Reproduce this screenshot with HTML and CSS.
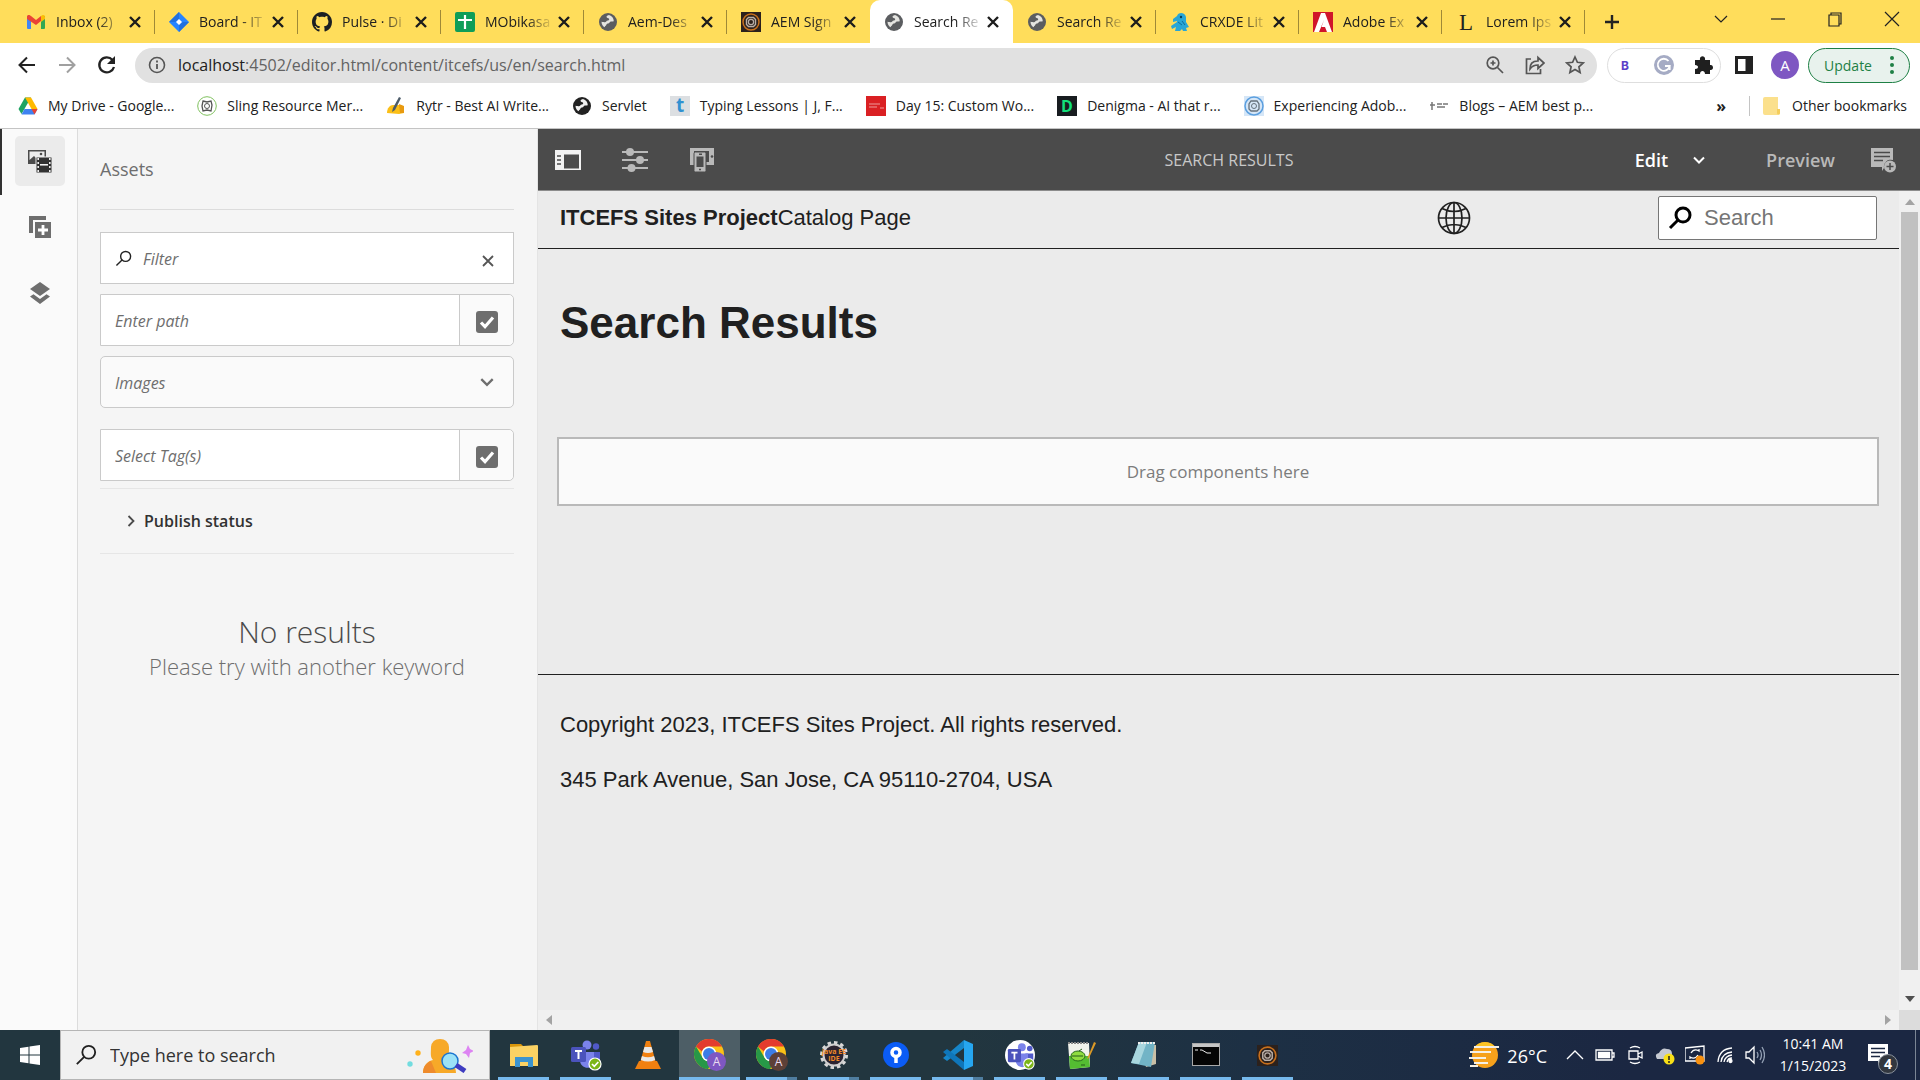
FILE: index.html
```
<!DOCTYPE html>
<html lang="en">
<head>
    <meta charset="UTF-8">
    <meta name="viewport" content="width=device-width, initial-scale=1.0">
    <title>Search Results</title>
    <link rel="stylesheet" href="styles.css">
</head>
<body>
    <!-- shared icons -->
    <svg class="sprite" aria-hidden="true">
        <symbol id="i-close" viewBox="0 0 14 14"><path d="M2 2l10 10M12 2L2 12" stroke="#1c1c1c" stroke-width="2.4" fill="none"/></symbol>
        <symbol id="i-world" viewBox="0 0 20 20"><circle cx="10" cy="10" r="9" fill="currentColor"/><path d="M11 3c-2 .5-3 1.500-2.200 2.500.8 1 2.700.6 2.400 2-.3 1.200-2.300.8-3 2-.5 1-1.700.6-4.700.2 0 3 1.600 4.500 3.100 5.500.4-1.500 1.900-1.500 2-2.900.2-1.100 2.500-.4 3-1.800.4-1.300 2.300-1 4.200-1.300-.2-3-1.700-5.400-4.800-6.200z"/></symbol>
        <symbol id="i-aem" viewBox="0 0 20 20"><circle cx="10" cy="10" r="8" fill="none" stroke="currentColor" stroke-width="1.500"/><path d="M7.500 5.500h5l2 2v5l-2 2h-5l-2-2v-5z" fill="none" stroke="#b9aea6" stroke-width="1.400"/><circle cx="10" cy="10" r="2.600" fill="none" stroke="#b9aea6" stroke-width="1.200"/></symbol>
        <symbol id="i-teams" viewBox="0 0 32 32"><circle cx="17" cy="6" r="4.500" fill="#7b83eb"/><circle cx="26" cy="7.500" r="3.200" fill="#5059c9"/><path d="M21 13h9v9a4 4 0 0 1-8 1z" fill="#5059c9"/><path d="M10 13h14v9c0 9-13 9-14 0z" fill="#7b83eb"/><rect x="1" y="8" width="15" height="15" rx="1.500" fill="#4b53bc"/><path d="M5 12h7M8.500 12v8" stroke="#fff" stroke-width="2"/><circle cx="25" cy="25" r="6" fill="#7cb518" stroke="#fff" stroke-width="1.200"/><path d="M22 25l2.300 2.300 4-4.300" fill="none" stroke="#fff" stroke-width="1.700"/></symbol>
        <symbol id="i-chrome" viewBox="0 0 32 32"><circle cx="15" cy="15" r="15" fill="#fbc116"/><path d="M2 7.500A15 15 0 0 1 28 7.500H15a7.500 7.500 0 0 0-7 5z" fill="#e33b2e"/><path d="M2 7.500A15 15 0 0 0 14 30l7-11a7.500 7.500 0 0 1-12.500-.500z" fill="#279847"/><circle cx="15" cy="15" r="7.500" fill="#fff"/><circle cx="15" cy="15" r="6" fill="#3c7de6"/><circle cx="22.500" cy="22.500" r="9.500" fill="currentColor"/><text x="22.500" y="27" text-anchor="middle" font-size="12" font-family="Open Sans, sans-serif" fill="#eadcf0">A</text></symbol>
        <symbol id="i-check" viewBox="0 0 24 24"><rect x="1" y="1" width="22" height="22" rx="3" fill="#6e6e6e"/><path d="M6 12.500l4 4.200L18 7.500" fill="none" stroke="#fff" stroke-width="3.200"/></symbol>
        <symbol id="i-down" viewBox="0 0 14 14"><path d="M2 4.500l5 5 5-5" fill="none" stroke="currentColor" stroke-width="2"/></symbol>
        <symbol id="i-lens" viewBox="0 0 24 24"><circle cx="15" cy="9" r="7" fill="none" stroke="currentColor"/><path d="M10.300 13.700L2 22" stroke="currentColor"/></symbol>
    </svg>

    <header class="browser">
        <div class="tab-strip">
            <nav class="tabs">
                <div class="tab"><svg class="favicon" viewBox="0 0 20 20"><path d="M1 4h4v13H2a1 1 0 0 1-1-1z" fill="#4285f4"/><path d="M15 4h4v12a1 1 0 0 1-1 1h-3z" fill="#34a853"/><path d="M1 5c0-3 3-2 4-1l5 4 5-4v5l-5 4-9-6z" fill="#ea4335"/><path d="M15 4c2-2 4-1 4 1v2l-4 3z" fill="#fbbc04"/></svg><span>Inbox (2)</span><button class="tab-close" aria-label="Close"><svg><use href="#i-close"/></svg></button></div>
                <div class="tab"><svg class="favicon" viewBox="0 0 20 20"><path d="M10 0l10 10-10 10L0 10z" fill="#2684ff"/><path d="M10 0v7l-4 3-6 0zM10 20v-7l4-3h6z" fill="#2070e0"/><path d="M10 7l3 3-3 3-3-3z" fill="#fff"/></svg><span>Board - IT</span><button class="tab-close" aria-label="Close"><svg><use href="#i-close"/></svg></button></div>
                <div class="tab"><svg class="favicon" viewBox="0 0 16 16"><path fill="#1b1f23" d="M8 0C3.580 0 0 3.580 0 8c0 3.540 2.290 6.530 5.470 7.590.4.070.55-.17.55-.38 0-.19-.01-.82-.01-1.490-2.010.37-2.530-.49-2.690-.94-.09-.23-.48-.94-.82-1.130-.28-.15-.68-.52-.01-.53.63-.01 1.080.58 1.230.82.72 1.210 1.870.87 2.330.66.070-.52.28-.87.51-1.070-1.780-.2-3.640-.89-3.640-3.950 0-.87.31-1.590.82-2.150-.08-.2-.36-1.020.08-2.120 0 0 .67-.21 2.200.82.64-.18 1.320-.27 2-.27s1.360.09 2 .27c1.530-1.040 2.200-.82 2.200-.82.44 1.100.16 1.920.08 2.120.51.56.82 1.270.82 2.150 0 3.070-1.870 3.750-3.650 3.950.29.25.54.73.54 1.480 0 1.070-.01 1.930-.01 2.200 0 .21.15.46.55.38A8.010 8.010 0 0 0 16 8c0-4.420-3.580-8-8-8z"/></svg><span>Pulse · Di</span><button class="tab-close" aria-label="Close"><svg><use href="#i-close"/></svg></button></div>
                <div class="tab"><svg class="favicon" viewBox="0 0 20 20"><rect width="20" height="20" rx="2" fill="#0f9d58"/><path d="M10 3v14M3 8h14" stroke="#fff" stroke-width="2.200"/></svg><span>MObikasa</span><button class="tab-close" aria-label="Close"><svg><use href="#i-close"/></svg></button></div>
                <div class="tab"><svg class="favicon world"><use href="#i-world"/></svg><span>Aem-Des</span><button class="tab-close" aria-label="Close"><svg><use href="#i-close"/></svg></button></div>
                <div class="tab before-active"><svg class="favicon aem"><use href="#i-aem"/></svg><span>AEM Sign</span><button class="tab-close" aria-label="Close"><svg><use href="#i-close"/></svg></button></div>
                <div class="tab active"><svg class="favicon world"><use href="#i-world"/></svg><span>Search Re</span><button class="tab-close" aria-label="Close"><svg><use href="#i-close"/></svg></button></div>
                <div class="tab"><svg class="favicon world"><use href="#i-world"/></svg><span>Search Re</span><button class="tab-close" aria-label="Close"><svg><use href="#i-close"/></svg></button></div>
                <div class="tab"><svg class="favicon" viewBox="0 0 20 20"><path d="M7 4c1-4 8-4 9 1v5l3 5-3 1 1 3h-4l-1-2-2 2H5l1-4-4 2-1-3 6-4V9L3 10V7z" fill="#28a6d6"/><circle cx="11" cy="5" r="1.200" fill="#083f5c"/><path d="M8 10l4 3M12 9l3 4" stroke="#0d6d9b" fill="none"/></svg><span>CRXDE Lit</span><button class="tab-close" aria-label="Close"><svg><use href="#i-close"/></svg></button></div>
                <div class="tab"><svg class="favicon" viewBox="0 0 20 20"><rect width="20" height="20" fill="#d0152a"/><path d="M1 20L8 1h4l7 19h-5l-2-5H8.500L11 8l0 0-5 12z" fill="#fff"/></svg><span>Adobe Ex</span><button class="tab-close" aria-label="Close"><svg><use href="#i-close"/></svg></button></div>
                <div class="tab"><svg class="favicon" viewBox="0 0 20 20"><text x="3" y="18" font-size="23" font-family="Liberation Serif, serif" fill="#222">L</text></svg><span>Lorem Ips</span><button class="tab-close" aria-label="Close"><svg><use href="#i-close"/></svg></button></div>
            </nav>
            <button class="new-tab" aria-label="New tab"><svg viewBox="0 0 16 16"><path d="M8 1v14M1 8h14" stroke="#222" stroke-width="2.400"/></svg></button>
            <div class="window-buttons">
                <button aria-label="Search tabs"><svg viewBox="0 0 16 16"><path d="M2 5l6 6 6-6"/></svg></button>
                <button aria-label="Minimize"><svg viewBox="0 0 16 16"><path d="M1 8h14"/></svg></button>
                <button aria-label="Restore"><svg viewBox="0 0 16 16"><path d="M2 4h10v11H2zM4 4V2h10v11h-2"/></svg></button>
                <button aria-label="Close window"><svg viewBox="0 0 16 16"><path d="M1 1l14 14M15 1L1 15"/></svg></button>
            </div>
        </div>

        <div class="address-row">
            <div class="nav-buttons">
                <button aria-label="Back"><svg viewBox="0 0 20 20"><path d="M18 10H3M10 2.500L2.500 10l7.500 7.500" fill="none" stroke="#222" stroke-width="2"/></svg></button>
                <button aria-label="Forward"><svg viewBox="0 0 20 20"><path d="M2 10h15M10 2.500l7.500 7.500-7.500 7.500" fill="none" stroke="#a0a0a0" stroke-width="2"/></svg></button>
                <button aria-label="Reload"><svg viewBox="0 0 20 20"><path d="M17 12a7.500 7.500 0 1 1-1.500-7" fill="none" stroke="#222" stroke-width="2.300"/><path d="M18 1v8h-8z" fill="#222"/></svg></button>
            </div>
            <div class="omnibox">
                <svg viewBox="0 0 18 18" class="info"><circle cx="9" cy="9" r="7.500" fill="none" stroke="#555" stroke-width="1.600"/><path d="M9 8v5M9 4.500v2" stroke="#555" stroke-width="1.800"/></svg>
                <a class="url" href="#"><b>localhost</b>:4502/editor.html/content/itcefs/us/en/search.html</a>
                <button aria-label="Zoom"><svg viewBox="0 0 20 20"><circle cx="8" cy="8" r="5.800" /><path d="M12.500 12.500L18 18M8 5.500v5M5.500 8h5"/></svg></button>
                <button aria-label="Share"><svg viewBox="0 0 20 20"><path d="M6 4H1.500v14.500h14V14"/><path d="M5 14c0-5 2-8 8-8V2.500l6 5.500-6 5.500V10c-4 0-6 1-8 4z"/></svg></button>
                <button aria-label="Bookmark"><svg viewBox="0 0 20 20"><path d="M10 2l2.400 5.300 5.800.6-4.300 3.900 1.200 5.700-5.100-2.900-5.100 2.900 1.200-5.700L1.800 7.900l5.800-.6z"/></svg></button>
            </div>
            <div class="extensions">
                <svg viewBox="0 0 20 20"><text x="6" y="15" font-size="12" font-weight="bold" font-family="Inter, sans-serif" fill="#5a40c8">B</text></svg>
                <svg viewBox="0 0 20 20"><circle cx="10" cy="10" r="10" fill="#a5abc4"/><path d="M14.500 6a6 6 0 1 0 1.200 5H11M15.700 11v4" fill="none" stroke="#fff" stroke-width="1.800"/></svg>
                <svg viewBox="0 0 20 20"><path d="M2 5h5c-1-5 6-5 5 0h5v5c4-1 4 6 0 5v4h-5c0-4-5-4-5 0H2v-5c4 0 4-4 0-4z" fill="#1f1f1f"/></svg>
            </div>
            <button class="side-panel" aria-label="Side panel"><svg viewBox="0 0 20 20"><path d="M1 1h18v18H1z" fill="#222"/><path d="M4 4h7.500v12H4z" fill="#fff"/></svg></button>
            <button class="avatar">A</button>
            <button class="update">Update <svg viewBox="0 0 4 18"><circle cx="2" cy="2" r="2"/><circle cx="2" cy="9" r="2"/><circle cx="2" cy="16" r="2"/></svg></button>
        </div>

        <nav class="bookmarks">
            <a href="#"><svg viewBox="0 0 20 20"><path d="M7 1.500h6L7 12 3.500 18 .5 13z" fill="#1ea362"/><path d="M7 1.500h6L19.500 13h-6z" fill="#ffba00"/><path d="M6.500 13h13l-3 5.500h-13z" fill="#3f82f1"/><path d="M13.500 13h6l-3 5.500z" fill="#e94335"/></svg>My Drive - Google...</a>
            <a href="#"><svg viewBox="0 0 20 20"><circle cx="10" cy="10" r="9.300" fill="#fff" stroke="#7fc15e"/><path d="M6 5l4 1 4-1 1 4-1 6-4-1-4 1-1-5z" fill="none" stroke="#555" stroke-width="1.300"/><circle cx="10" cy="10" r="2.500" fill="none" stroke="#555"/></svg>Sling Resource Mer...</a>
            <a href="#"><svg viewBox="0 0 20 20"><path d="M1 17c0-5 3-8 6-8l8 0 3 2v6l-5 1z" fill="#fbbf17"/><path d="M13 8l5 2v7l-4 0z" fill="#e89a10"/><path d="M13 1l2 1-6 12-3 2 1-4z" fill="#4c5b69"/></svg>Rytr - Best AI Write...</a>
            <a href="#"><svg class="dark-world"><use href="#i-world"/></svg>Servlet</a>
            <a href="#"><svg viewBox="0 0 20 20"><rect width="20" height="20" fill="#dcdfe2"/><text x="6" y="16" font-size="19" font-weight="bold" font-family="Open Sans, sans-serif" fill="#3191d1">t</text></svg>Typing Lessons | J, F...</a>
            <a href="#"><svg viewBox="0 0 20 20"><rect width="20" height="20" fill="#da2023"/><path d="M3 8h11M3 11h8M14 12h4" stroke="#ee9a9a"/></svg>Day 15: Custom Wo...</a>
            <a href="#"><svg viewBox="0 0 20 20"><rect width="20" height="20" fill="#181c20"/><text x="4" y="16" font-size="16" font-weight="bold" font-family="Open Sans, sans-serif" fill="#12e07a">D</text></svg>Denigma - AI that r...</a>
            <a href="#"><svg viewBox="0 0 20 20"><rect width="20" height="20" fill="#d5e6f7"/><circle cx="10" cy="10" r="9" fill="none" stroke="#5b9fdf" stroke-width="1.500"/><path d="M7 5h6l2 3v5l-2 2H7l-2-2V8z" fill="none" stroke="#66727c" stroke-width="1.300"/><circle cx="10" cy="10" r="2.500" fill="none" stroke="#66727c"/></svg>Experiencing Adob...</a>
            <a href="#"><svg viewBox="0 0 20 20"><path d="M1 9h5M3 6v8M8 8h5M8 11h8M14 8h5" stroke="#777" stroke-width="1.500"/></svg>Blogs – AEM best p...</a>
            <button class="more" aria-label="More bookmarks">»</button>
            <a href="#" class="other"><svg viewBox="0 0 20 20"><path d="M3 1h13v12h2v4a2 2 0 0 1-2 2H3a2 2 0 0 1-2-2V3a2 2 0 0 1 2-2z" fill="#fbe08c"/><path d="M15 13h3v4a1.500 1.500 0 0 1-3 0z" fill="#f4cd5c"/></svg>Other bookmarks</a>
        </nav>
    </header>

    <main class="workspace">
        <nav class="rail">
            <button class="selected" aria-label="Assets"><svg viewBox="0 0 24 24"><path d="M0 1h18v14H0z" fill="#4b4b4b"/><path d="M1.500 2.500h15V8H8v1L6 7l-4.500 4z" fill="#ececec"/><circle cx="13" cy="5" r="1.300" fill="#4b4b4b"/><path d="M8 8h16v16H8z" fill="#323232" stroke="#ececec"/><path d="M12 15.800h8" stroke="#fff" stroke-width="1.500"/><path d="M10.200 9v14M21.800 9v14" stroke="#ececec" stroke-width="1.600" stroke-dasharray="2 2"/></svg></button>
            <button aria-label="Components"><svg viewBox="0 0 24 24"><path d="M1 1h17v4H5v13H1z" fill="#6e6e6e"/><path d="M7 7h16v16H7z" fill="#6e6e6e"/><path d="M15 10v10M10 15h10" stroke="#fff" stroke-width="2.800"/></svg></button>
            <button aria-label="Content tree"><svg viewBox="0 0 24 24"><path d="M12 1l10 7-10 7L2 8z" fill="#6e6e6e"/><path d="M2 15.500l3.500-2.300L12 18l6.500-4.800 3.500 2.300L12 23z" fill="#6e6e6e"/></svg></button>
        </nav>

        <aside class="assets">
            <h2>Assets</h2>
            <div class="field">
                <svg class="lens"><use href="#i-lens"/></svg>
                <input type="text" aria-label="Filter" placeholder="Filter">
                <button class="clear" aria-label="Clear"><svg viewBox="0 0 14 14"><path d="M2 2l10 10M12 2L2 12" stroke="#555" stroke-width="1.800"/></svg></button>
            </div>
            <div class="field joined">
                <input type="text" aria-label="Path" placeholder="Enter path">
                <button class="pick" aria-label="Select path"><svg><use href="#i-check"/></svg></button>
            </div>
            <div class="field type">
                <select aria-label="Asset type"><option>Images</option></select>
                <svg class="arrow"><use href="#i-down"/></svg>
            </div>
            <div class="field joined tags">
                <input type="text" aria-label="Tags" placeholder="Select Tag(s)">
                <button class="pick" aria-label="Select tags"><svg><use href="#i-check"/></svg></button>
            </div>
            <button class="accordion"><svg viewBox="0 0 14 14"><path d="M4.500 2l5 5-5 5" fill="none" stroke="#4b4b4b" stroke-width="1.800"/></svg>Publish status</button>
            <div class="empty">
                <h3>No results</h3>
                <p>Please try with another keyword</p>
            </div>
        </aside>

        <section class="editor">
            <div class="editor-bar">
                <div class="tools">
                    <button aria-label="Toggle side panel"><svg viewBox="0 0 26 24"><path d="M0 2h26v20H0z" fill="#f2f2f2"/><path d="M9 6.500h15V20.500H9z" fill="#4b4b4b"/><path d="M2 8h4M2 12h4M2 16h4" stroke="#4b4b4b" stroke-width="1.300"/></svg></button>
                    <button aria-label="Page information"><svg viewBox="0 0 26 24"><path d="M0 4h26M0 12h26M0 20h26" stroke="#b9b9b9" stroke-width="2"/><circle cx="8" cy="4" r="4" fill="#b9b9b9"/><circle cx="18" cy="12" r="4" fill="#b9b9b9"/><circle cx="9.500" cy="20" r="4" fill="#b9b9b9"/></svg></button>
                    <button aria-label="Emulator"><svg viewBox="0 0 26 24"><path d="M1 0h24v17h-8v-3h3V3H5v14H1z" fill="#b9b9b9"/><rect x="5" y="4" width="12" height="20" rx="1.500" fill="#b9b9b9" stroke="#4b4b4b"/><path d="M7.500 8.500h7v10.500h-7z" fill="#4b4b4b"/><path d="M10 6.300h3M10 21.500h2" stroke="#4b4b4b" stroke-width="1.500"/><circle cx="23" cy="8.500" r="1.300" fill="#4b4b4b"/></svg></button>
                </div>
                <span class="page-name">SEARCH RESULTS</span>
                <div class="modes">
                    <button class="mode">Edit <svg><use href="#i-down"/></svg></button>
                    <button class="preview">Preview</button>
                    <button class="annotate" aria-label="Annotate"><svg viewBox="0 0 26 26"><path d="M1 1h22v12a7 7 0 0 0-9 8l-2 3v-4H1z" fill="#b9b9b9"/><path d="M4 5.500h16M4 9.500h16M4 13.500h9" stroke="#4b4b4b" stroke-width="1.300"/><circle cx="20" cy="19.500" r="6" fill="#b9b9b9"/><path d="M20 16v7M16.500 19.500h7" stroke="#4b4b4b" stroke-width="1.500"/></svg></button>
                </div>
            </div>

            <div class="viewport">
                <div class="page">
                    <header class="site-header">
                        <p><b>ITCEFS Sites Project</b>Catalog Page</p>
                        <button class="language" aria-label="Language"><svg viewBox="0 0 34 34"><g fill="none" stroke="#202020" stroke-width="1.700"><circle cx="17" cy="17" r="15.500"/><ellipse cx="17" cy="17" rx="8" ry="15.500"/><path d="M17 1.500v31M1.500 17h31M5 7.500q12 6 24 0M5 26.500q12-6 24 0"/></g></svg></button>
                        <label class="site-search">
                            <svg class="thick"><use href="#i-lens"/></svg>
                            <input type="text" aria-label="Search" placeholder="Search">
                        </label>
                    </header>
                    <div class="site-main">
                        <h1>Search Results</h1>
                        <div class="drop-zone">Drag components here</div>
                    </div>
                    <footer class="site-footer">
                        <p>Copyright 2023, ITCEFS Sites Project. All rights reserved.</p>
                        <p>345 Park Avenue, San Jose, CA 95110-2704, USA</p>
                    </footer>
                </div>
                <div class="scroll-y">
                    <svg viewBox="0 0 10 10"><path d="M0 8l5-6 5 6z" fill="#a3a3a3"/></svg>
                    <div class="thumb"></div>
                    <svg viewBox="0 0 10 10"><path d="M0 2l5 6 5-6z" fill="#505050"/></svg>
                </div>
                <div class="scroll-x">
                    <svg viewBox="0 0 10 10"><path d="M8 0L2 5l6 5z" fill="#a3a3a3"/></svg>
                    <svg viewBox="0 0 10 10"><path d="M2 0l6 5-6 5z" fill="#a3a3a3"/></svg>
                </div>
                <div class="corner"></div>
            </div>
        </section>
    </main>

    <footer class="taskbar">
        <button class="start" aria-label="Start"><svg viewBox="0 0 20 20"><path d="M0 3l8.500-1.200v7.700H0zM9.500 1.600L20 0v9.500H9.500zM0 10.500h8.500v7.700L0 17zM9.500 10.500H20V20L9.500 18.400z" fill="#fff"/></svg></button>
        <label class="task-search">
            <svg class="lens"><use href="#i-lens"/></svg>
            <input type="text" aria-label="Windows search" placeholder="Type here to search">
            <svg class="search-art" viewBox="0 0 66 36"><circle cx="11" cy="16" r="2.700" fill="#ffb11b"/><circle cx="3" cy="27" r="2.700" fill="#72dcdf"/><path d="M16 36c0-8 5-12 10-13-3-3-2-7-2-13q1-8 9-8t9 8c0 6 0 10-3 13 5 1 10 5 10 13z" fill="#f7a928"/><path d="M16 36c0-6 3-10 8-12l5 12z" fill="#ee8b2c"/><circle cx="43" cy="24" r="8" fill="#9ce2f7" stroke="#1c75cf" stroke-width="1.500"/><path d="M49 28l9 6" stroke="#3f3cc0" stroke-width="5"/><path d="M61 8l2 4 4 2-4 2-1 5-3-4-4-1 4-3z" fill="#dd84f2"/></svg>
        </label>
        <nav class="apps">
            <button class="open" aria-label="File Explorer"><svg viewBox="0 0 32 32"><path d="M2 5h11l3 3H2z" fill="#d9960b"/><path d="M2 8l27-2q1 0 1 1v20H2z" fill="#fbd263"/><path d="M7 28V18h18v10h-5v-5h-8v5z" fill="#3c94cf"/></svg></button>
            <button class="open" aria-label="Teams"><svg><use href="#i-teams"/></svg></button>
            <button aria-label="VLC"><svg viewBox="0 0 32 32"><path d="M7 22h18l4 8H3z" fill="#f08010"/><path d="M14 2h4l6 22q-8 4-16 0z" fill="#f08010"/><path d="M12.500 8h7l1.500 5q-5 2-10 0zM10 17q6 2.500 12 0l1.200 4q-7 3-14.400 0z" fill="#e8e8e8"/></svg></button>
            <button class="open current chrome-violet" aria-label="Chrome"><svg><use href="#i-chrome"/></svg></button>
            <button class="open stacked chrome-brown" aria-label="Chrome"><svg><use href="#i-chrome"/></svg></button>
            <button class="open stacked" aria-label="Eclipse"><svg viewBox="0 0 32 32"><circle cx="16" cy="16" r="12.500" fill="none" stroke="#d8d8d8" stroke-width="3" stroke-dasharray="3.500 3"/><circle cx="16" cy="16" r="10.500" fill="#2b2330" stroke="#cfcfcf" stroke-width="2"/><text x="16" y="15" text-anchor="middle" font-size="7" font-weight="bold" font-family="Open Sans, sans-serif" fill="#f08a28">Java EE</text><text x="16" y="22" text-anchor="middle" font-size="7" font-weight="bold" font-family="Open Sans, sans-serif" fill="#f08a28">IDE</text></svg></button>
            <button class="open" aria-label="Sourcetree"><svg viewBox="0 0 32 32"><circle cx="16" cy="16" r="13" fill="#0b5cf5"/><circle cx="16" cy="13.500" r="4" fill="none" stroke="#fff" stroke-width="3.500"/><path d="M16 17v7" stroke="#fff" stroke-width="3.500"/></svg></button>
            <button class="open stacked" aria-label="VS Code"><svg viewBox="0 0 32 32"><path d="M22 1l9 4v22l-9 4z" fill="#26a6f0"/><path d="M22 1v8L5 22l-4-3z" fill="#1686c9"/><path d="M22 31v-8L5 10l-4 3z" fill="#0f76b9"/></svg></button>
            <button class="open" aria-label="Teams"><svg viewBox="0 0 32 32"><circle cx="16" cy="16" r="15" fill="#fff"/><use href="#i-teams" x="3" y="3" width="28" height="28"/></svg></button>
            <button class="open" aria-label="Notepad++"><svg viewBox="0 0 32 32"><path d="M2 4h21l1 24-20 2z" fill="#f1f3ec"/><path d="M3 17h20l1 11-20 2z" fill="#54bd32"/><path d="M2 4h21" stroke="#888" stroke-width="2" stroke-dasharray="2 1"/><ellipse cx="12" cy="17" rx="7" ry="5" fill="#8fdc3f" stroke="#276b1e"/><path d="M6 17h11M13 12l3-2M15 26h4" stroke="#245a1c"/><path d="M28 3l2 1-7 15-2 1z" fill="#dc9a26"/></svg></button>
            <button class="open" aria-label="Notepad"><svg viewBox="0 0 32 32"><path d="M11 4l17 2v19l-10 3z" fill="#c9bfa6"/><path d="M11 3h16l-4 25-20-4z" fill="#72b4c6"/><path d="M11 3h8l-8 22-8-1z" fill="#a9d7df"/><path d="M10 4h18" stroke="#eee" stroke-width="2" stroke-dasharray="2 1"/></svg></button>
            <button class="open" aria-label="Command Prompt"><svg viewBox="0 0 32 32"><rect x="2.500" y="4.500" width="27" height="22" fill="#050505" stroke="#a8a8a8"/><path d="M3 5h26v3H3z" fill="#c6c6c6"/><path d="M5 11h3M10 11h2l5 3h4" stroke="#eee" fill="none"/></svg></button>
            <button class="open" aria-label="AEM"><svg class="aem small"><use href="#i-aem"/></svg></button>
        </nav>
        <div class="tray">
            <svg class="sun" viewBox="0 0 32 28"><circle cx="17" cy="14" r="13" fill="#f6a11c"/><path d="M6 7a13 13 0 0 1 22 0z" fill="#fcc425"/><path d="M6 6h25M2 11h21M1 17h17M6 22h14M2 25h8" stroke="#f5f0e6" stroke-width="2"/></svg>
            <span class="temp">26°C</span>
            <div class="tray-icons">
                <svg viewBox="0 0 20 20"><path d="M2 14l8-8 8 8"/></svg>
                <svg viewBox="0 0 20 20"><path d="M1 5h16v10H1zM17 8h2v4h-2"/><path d="M3.500 7.500h11v5h-11z" fill="#fff"/></svg>
                <svg viewBox="0 0 20 20"><path d="M4 6h9v8H4zM13 9l4-2v6l-4-2M5 3q5-3 10 0M5 17q5 3 10 0"/></svg>
                <svg viewBox="0 0 20 20"><path d="M2 14q-3-5 2-6 3-6 8-4 5 0 5 5v5z" fill="#c5c9d1" stroke="none"/><circle cx="14" cy="14" r="5.500" fill="#f8df17" stroke="none"/><path d="M14 11v4M14 16v2" stroke="#222" stroke-width="1.500"/></svg>
                <svg viewBox="0 0 20 20"><path d="M0 3l19-2v15H0zM6 8q3-5 8-2V4M13 10q-3 5-8 2v2"/><circle cx="15" cy="15" r="4.500" fill="#f99110" stroke="none"/></svg>
                <svg viewBox="0 0 20 20"><path d="M3 17Q4 4 17 3M6 17Q7 8 17 7M9 17q1-6 8-7M12 17q1-4 5-4"/><circle cx="15.500" cy="16" r="1.500" fill="#fff"/></svg>
                <svg viewBox="0 0 20 20"><path d="M1 7h3l5-5v16l-5-5H1z"/><path d="M12 7q2 3 0 6M15 5q3 5 0 10M17 2q5 8 0 16" stroke="#93a0b4"/></svg>
            </div>
            <div class="clock"><span>10:41 AM</span><span>1/15/2023</span></div>
            <button class="notify" aria-label="Notifications"><svg viewBox="0 0 30 30"><path d="M0 0h20v17h-6l-4 4v-4H0z" fill="#fff"/><path d="M3 4.500h14M3 8.500h14M3 12.500h9" stroke="#1b2742" stroke-width="1.300"/><circle cx="20" cy="20" r="9.500" fill="#32373f" stroke="#8a929c"/><text x="20" y="25" text-anchor="middle" font-size="14" font-weight="bold" font-family="Open Sans, sans-serif" fill="#fff">4</text></svg></button>
        </div>
    </footer>
</body>
</html>
```
FILE: styles.css
```
* {
    box-sizing: border-box;
}

body {
    margin: 0;
    height: 100vh;
    display: flex;
    flex-direction: column;
    overflow: hidden;
    font-family: "Open Sans", "Noto Sans", sans-serif;
    color: #202020;
}

button,
input,
select {
    font: inherit;
    color: inherit;
    background: none;
    border: none;
    padding: 0;
    margin: 0;
    min-width: 0;
}

button {
    display: flex;
    align-items: center;
    justify-content: center;
    flex-shrink: 0;
}

svg {
    width: 20px;
    height: 20px;
    flex-shrink: 0;
}

a {
    color: inherit;
    text-decoration: none;
}

h1, h2, h3, p {
    margin: 0;
}

.sprite {
    position: absolute;
    width: 0;
    height: 0;
}

/* Browser tabs */
.tab-strip {
    display: flex;
    height: 43px;
    background: #ffdd5b;
    padding-left: 12px;
}

.tabs {
    display: flex;
}

.tab {
    display: flex;
    align-items: center;
    width: 143px;
    padding: 0 13px 0 14px;
    font-size: 14px;
    background: linear-gradient(#9f8937, #9f8937) right center / 1px 24px no-repeat;
}

.tab span {
    flex: 1;
    margin-left: 10px;
    margin-right: 3px;
    white-space: nowrap;
    mask-image: linear-gradient(to right, #000 60%, transparent);
}

.tab.before-active {
    background: none;
}

.tab.active {
    background: #fff;
    border-radius: 10px 10px 0 0;
}

.tab-close svg {
    width: 14px;
    height: 14px;
}

.world {
    color: #5b5d60;
    fill: #e4e4e0;
}

.dark-world {
    color: #222;
    fill: #f2f2f2;
}

.aem {
    color: #c8701d;
    background: #2c211c;
}

.new-tab {
    width: 54px;
}

.new-tab svg {
    width: 16px;
    height: 16px;
}

.window-buttons {
    display: flex;
    margin-left: auto;
}

.window-buttons button {
    width: 57px;
    height: 37px;
}

.window-buttons svg {
    width: 16px;
    height: 16px;
    fill: none;
    stroke: #222;
    stroke-width: 1.2px;
}

/* Address row */
.address-row {
    display: flex;
    align-items: center;
    height: 44px;
    padding-right: 10px;
    background: #fff;
}

.nav-buttons {
    display: flex;
    width: 135px;
    padding-left: 7px;
}

.nav-buttons button {
    width: 40px;
}

.omnibox {
    display: flex;
    align-items: center;
    flex: 1;
    height: 35px;
    padding: 0 2px 0 13px;
    border-radius: 18px;
    background: #e1e1e1;
}

.info {
    width: 18px;
    height: 18px;
}

.url {
    flex: 1;
    margin-left: 12px;
    font-size: 16px;
    color: #636363;
}

.url b {
    font-weight: normal;
    color: #202020;
}

.omnibox button {
    width: 40px;
}

.omnibox button svg {
    fill: none;
    stroke: #555;
    stroke-width: 1.7px;
}

.extensions {
    display: flex;
    align-items: center;
    justify-content: space-between;
    width: 114px;
    height: 35px;
    margin-left: 10px;
    padding: 0 7px;
    border: 1px solid #dedede;
    border-radius: 18px;
}

.side-panel {
    width: 46px;
}

.avatar {
    width: 28px;
    height: 28px;
    margin-right: 9px;
    margin-left: 4px;
    border-radius: 50%;
    background: #7e57c2;
    color: #fff;
    font-size: 15px;
}

.update {
    width: 102px;
    height: 35px;
    gap: 18px;
    border: 1px solid #1e8045;
    border-radius: 18px;
    background: #e8f2ed;
    color: #1e8045;
    font-size: 14px;
}

.update svg {
    width: 4px;
    height: 18px;
    fill: #1e8045;
}

/* Bookmarks */
.bookmarks {
    display: flex;
    align-items: center;
    height: 42px;
    padding: 0 13px 4px 18px;
    gap: 23px;
    border-bottom: 1px solid #c4c4c4;
    font-size: 14px;
    white-space: nowrap;
}

.bookmarks a {
    display: flex;
    align-items: center;
    gap: 10px;
}

.more {
    margin-left: auto;
    font-size: 16px;
    font-weight: bold;
}

.bookmarks .other {
    padding-left: 12px;
    border-left: 1px solid #c4c4c4;
}

/* Workspace */
.workspace {
    display: flex;
    flex: 1;
    min-height: 0;
}

.rail {
    display: flex;
    flex-direction: column;
    gap: 16px;
    width: 78px;
    padding: 7px 0 0 15px;
    border-right: 1px solid #dcdcdc;
    background: linear-gradient(#323232, #323232) left top / 2px 66px no-repeat #fafafa;
}

.rail button {
    width: 50px;
    height: 50px;
    border-radius: 5px;
}

.rail .selected {
    background: #ebebeb;
}

.rail svg {
    width: 24px;
    height: 24px;
}

.assets {
    width: 460px;
    padding: 0 23px 0 22px;
    border-right: 1px solid #e4e4e4;
    background: #f5f5f5;
}

.assets h2 {
    height: 81px;
    line-height: 80px;
    margin-bottom: 22px;
    border-bottom: 1px solid #dcdcdc;
    font-size: 18px;
    font-weight: normal;
    color: #6e6e6e;
}

.field {
    display: flex;
    align-items: center;
    height: 52px;
    margin-bottom: 10px;
    padding: 0 14px;
    border: 1px solid #cacaca;
    background: #fff;
    font-size: 16px;
    font-style: italic;
    color: #6e6e6e;
}

.field input,
.field select {
    flex: 1;
    height: 100%;
    padding-top: 2px;
    appearance: none;
}

.field input::placeholder {
    color: #6e6e6e;
}

.field .lens {
    width: 17px;
    height: 17px;
    margin-right: 11px;
    color: #222;
    stroke-width: 2px;
}

.clear {
    width: 22px;
    padding-top: 6px;
}

.clear svg {
    width: 14px;
    height: 14px;
}

.joined {
    padding-right: 0;
    border-radius: 0 5px 5px 0;
}

.pick {
    width: 54px;
    height: 50px;
    padding-top: 3px;
    border-left: 1px solid #cacaca;
    border-radius: 0 5px 5px 0;
    background: #fafafa;
}

.pick svg {
    width: 24px;
    height: 24px;
}

.type {
    border-radius: 5px;
    background: #fafafa;
    margin-bottom: 21px;
}

.arrow {
    width: 16px;
    height: 16px;
    margin-right: 4px;
}

.tags {
    margin-bottom: 7px;
}

.accordion {
    justify-content: flex-start;
    gap: 6px;
    width: 100%;
    height: 66px;
    padding-left: 24px;
    border-top: 1px solid #e6e6e6;
    border-bottom: 1px solid #e6e6e6;
    font-size: 16px;
    font-weight: 600;
    color: #323232;
}

.accordion svg {
    width: 14px;
    height: 14px;
}

.empty {
    margin-top: 58px;
    text-align: center;
    font-weight: 300;
    color: #4b4b4b;
}

.empty h3 {
    font-size: 30px;
    line-height: 40px;
    font-weight: 300;
}

.empty p {
    font-size: 22px;
    line-height: 28px;
    color: #6e6e6e;
}

/* Editor */
.editor {
    display: flex;
    flex-direction: column;
    flex: 1;
    min-width: 0;
}

.editor-bar {
    display: grid;
    grid-template-columns: 1fr auto 1fr;
    align-items: center;
    height: 62px;
    border-bottom: 1px solid #8c8c8c;
    background: #4b4b4b;
    color: #c8c8c8;
}

.tools {
    display: flex;
    gap: 41px;
    padding-left: 17px;
}

.tools svg {
    width: 26px;
    height: 24px;
}

.page-name {
    font-size: 16px;
}

.modes {
    display: flex;
    justify-content: flex-end;
    padding-right: 24px;
    font-size: 18px;
    font-weight: 600;
    color: #b9b9b9;
}

.mode {
    gap: 24px;
    color: #fff;
}

.mode svg {
    width: 14px;
    height: 14px;
}

.preview {
    margin-left: 60px;
}

.annotate {
    margin-left: 35px;
}

.annotate svg {
    width: 26px;
    height: 26px;
}

.viewport {
    flex: 1;
    display: grid;
    grid-template-columns: 1fr 21px;
    grid-template-rows: 1fr 20px;
    min-height: 0;
    background: #f0f0f0;
}

.page {
    overflow: hidden;
    background: #ebebeb;
    font-family: "Liberation Sans", Arial, sans-serif;
    font-size: 22px;
}

.site-header {
    display: flex;
    align-items: center;
    height: 58px;
    padding: 0 22px 4px;
    border-bottom: 1px solid #202020;
}

.site-header p {
    flex: 1;
}

.language {
    margin-right: 187px;
}

.language svg {
    width: 34px;
    height: 34px;
}

.site-search {
    display: flex;
    align-items: center;
    width: 219px;
    height: 44px;
    padding: 0 9px;
    border: 1px solid #767676;
    border-radius: 2px;
    background: #fff;
}

.site-search input {
    flex: 1;
    margin-left: 12px;
    font-size: 22px;
}

.thick {
    width: 24px;
    height: 24px;
    color: #000;
    stroke-width: 3px;
}

.site-search input::placeholder {
    color: #757575;
}

.site-main {
    min-height: 425px;
    padding: 48px 20px 0 19px;
}

.site-main h1 {
    margin: 0 3px 88px;
    font-size: 44px;
    line-height: 52px;
}

.drop-zone {
    display: flex;
    align-items: center;
    justify-content: center;
    height: 69px;
    border: 2px solid #b9b9b9;
    background: #fafafa;
    font-family: "Open Sans", "Noto Sans", sans-serif;
    font-size: 17px;
    color: #7c7c7c;
}

.site-footer {
    padding: 35px 22px;
    border-top: 1px solid #202020;
}

.site-footer p {
    line-height: 30px;
    margin-bottom: 25px;
}

.scroll-y {
    display: flex;
    flex-direction: column;
    align-items: center;
    padding: 6px 0;
}

.scroll-y svg,
.scroll-x svg {
    width: 10px;
    height: 10px;
}

.thumb {
    flex: 1;
    width: 17px;
    margin: 5px 0 24px;
    background: #c1c1c1;
}

.scroll-x {
    display: flex;
    align-items: center;
    justify-content: space-between;
    padding: 0 6px;
}

.corner {
    background: #dcdcdc;
}

/* Taskbar */
.taskbar {
    display: flex;
    height: 50px;
    background: linear-gradient(to right, #22363f, #22363f 50%, #1d3044 65%, #1b2742 85%);
    color: #fff;
}

.start {
    width: 60px;
}

.task-search {
    display: flex;
    align-items: center;
    width: 430px;
    padding: 0 16px 0 14px;
    border: 1px solid #b5b5b5;
    background: #f1f1f1;
    color: #202020;
}

.task-search input {
    flex: 1;
    margin-left: 13px;
    font-size: 18px;
}

.task-search input::placeholder {
    color: #333;
}

.task-search .lens {
    width: 22px;
    height: 22px;
    stroke-width: 2px;
}

.search-art {
    width: 66px;
    height: 36px;
}

.apps {
    display: flex;
    gap: 1px;
    padding-left: 3px;
}

.apps button {
    width: 61px;
}

.apps svg {
    width: 32px;
    height: 32px;
}

.apps .open {
    background: linear-gradient(#76b9ed, #76b9ed) center bottom / 51px 3px no-repeat;
}

.apps .stacked {
    background: linear-gradient(to right, #76b9ed 41px, #4f7d9f 41px) center bottom / 51px 3px no-repeat;
}

.apps .current {
    background: linear-gradient(#76b9ed, #76b9ed) center bottom / 61px 3px no-repeat #4d5e66;
}

.chrome-violet {
    color: #7e57c2;
}

.chrome-brown {
    color: #5d4037;
}

.apps .small {
    width: 21px;
    height: 21px;
}

.tray {
    display: flex;
    align-items: center;
    margin-left: auto;
    padding-right: 4px;
}

.sun {
    width: 32px;
    height: 28px;
}

.temp {
    margin: 2px 18px 0 7px;
    font-size: 18px;
}

.tray-icons {
    display: flex;
    gap: 10px;
}

.tray-icons svg {
    fill: none;
    stroke: #fff;
    stroke-width: 1.3px;
}

.clock {
    display: flex;
    flex-direction: column;
    align-items: center;
    width: 96px;
    font-size: 14px;
    line-height: 22px;
}

.notify {
    padding: 8px 17px 0 7px;
    height: 50px;
    border-right: 1px solid #7b8594;
}

.notify svg {
    width: 30px;
    height: 30px;
}
```
